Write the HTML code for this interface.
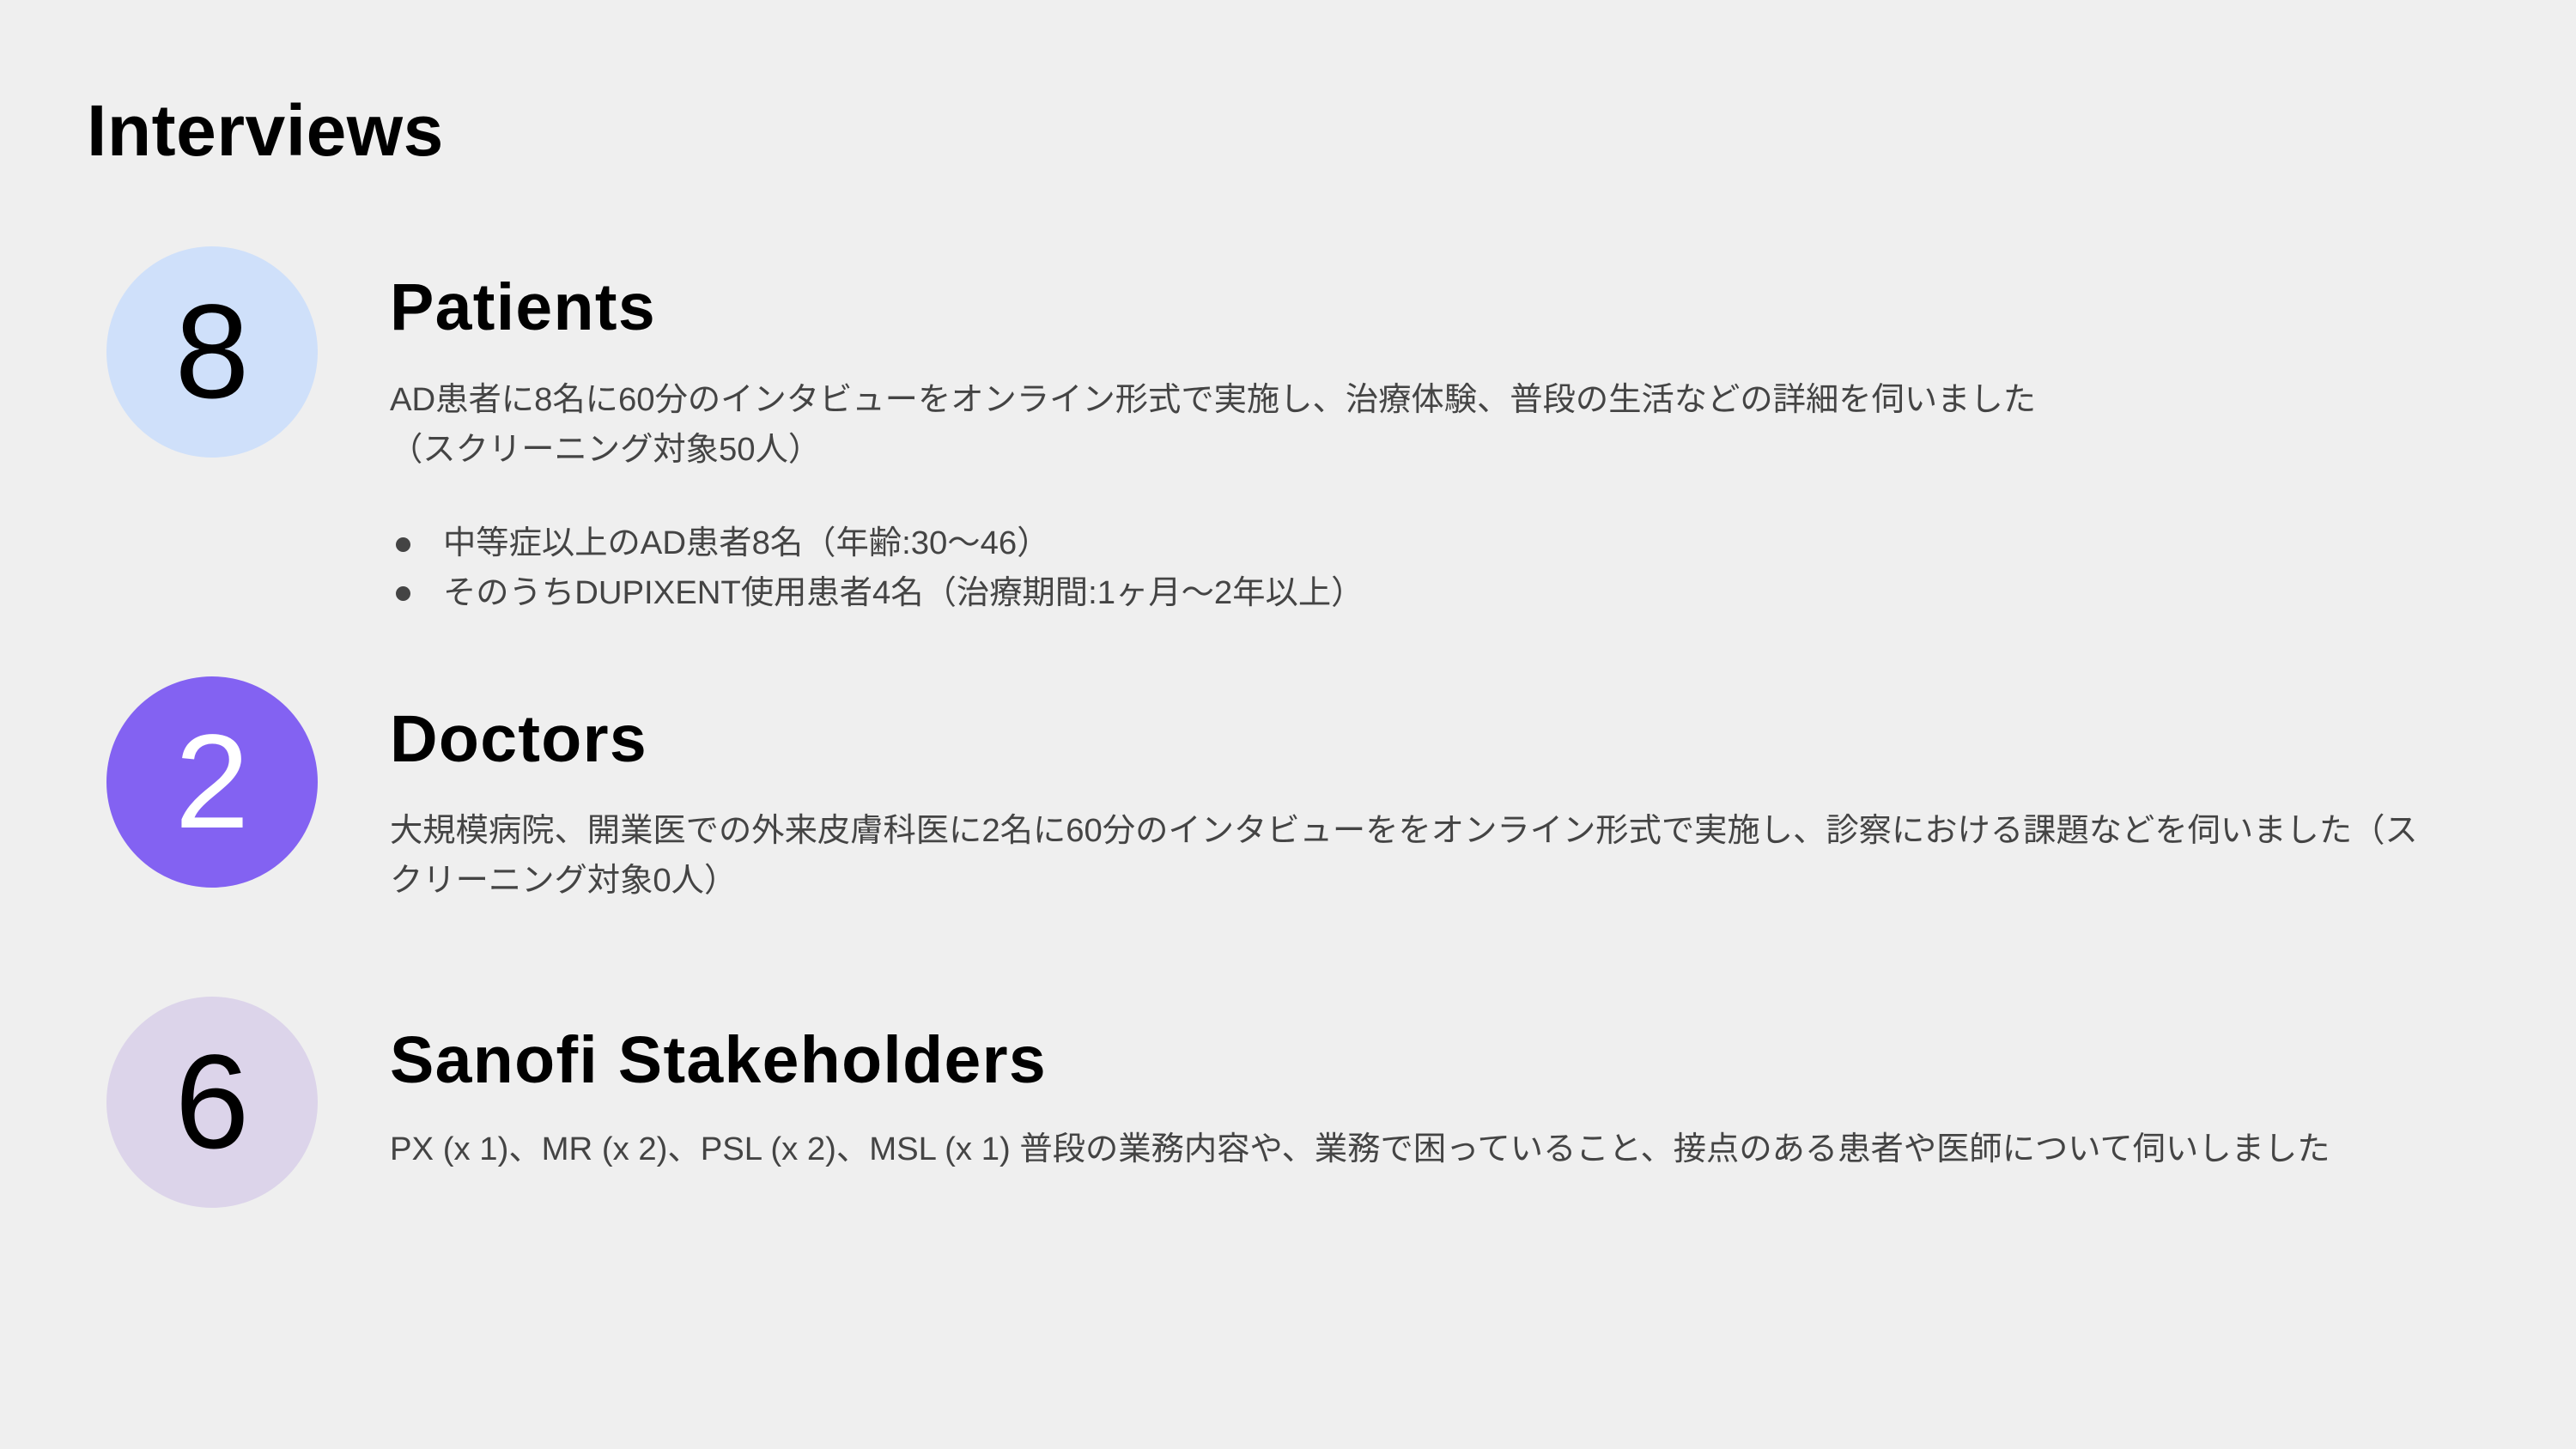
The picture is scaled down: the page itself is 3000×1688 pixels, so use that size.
<!DOCTYPE html>
<html><head><meta charset="utf-8"><style>
html,body{margin:0;padding:0;}
body{width:3000px;height:1688px;background:#efefef;position:relative;overflow:hidden;font-family:"Liberation Sans","Noto Sans CJK JP",sans-serif;}
.abs{position:absolute;white-space:nowrap;}
.title{left:101px;top:110px;font-size:84px;font-weight:bold;color:#000;line-height:1;letter-spacing:0.5px;}
.circ{position:absolute;width:246px;height:246px;border-radius:50%;left:124px;display:flex;align-items:center;justify-content:center;font-size:156px;line-height:1;}
.h{left:454px;font-size:77px;font-weight:bold;color:#000;line-height:1;letter-spacing:1.3px;}
.b{left:454px;font-size:38.3px;color:#444;line-height:58px;}
.dot{position:absolute;width:17px;height:17px;border-radius:50%;background:#444;}
</style></head><body>
<div class="abs title">Interviews</div>

<div class="circ" style="top:287px;background:#cfe0fa;color:#000;">8</div>
<div class="abs h" style="top:320px;">Patients</div>
<div class="abs b" style="top:437px;">AD患者に8名に60分のインタビューをオンライン形式で実施し、治療体験、普段の生活などの詳細を伺いました<br>（スクリーニング対象50人）</div>
<div class="dot" style="left:461px;top:626px;"></div>
<div class="dot" style="left:461px;top:683px;"></div>
<div class="abs b" style="left:516px;top:604px;">中等症以上のAD患者8名（年齢:30～46）<br>そのうちDUPIXENT使用患者4名（治療期間:1ヶ月～2年以上）</div>

<div class="circ" style="top:788px;background:#8362f2;color:#fff;">2</div>
<div class="abs h" style="top:823px;">Doctors</div>
<div class="abs b" style="top:939px;">大規模病院、開業医での外来皮膚科医に2名に60分のインタビューををオンライン形式で実施し、診察における課題などを伺いました（ス<br>クリーニング対象0人）</div>

<div class="circ" style="top:1161px;background:#dcd4ea;color:#000;">6</div>
<div class="abs h" style="top:1197px;">Sanofi Stakeholders</div>
<div class="abs b" style="top:1310px;">PX (x 1)、MR (x 2)、PSL (x 2)、MSL (x 1) 普段の業務内容や、業務で困っていること、接点のある患者や医師について伺いしました</div>
</body></html>
